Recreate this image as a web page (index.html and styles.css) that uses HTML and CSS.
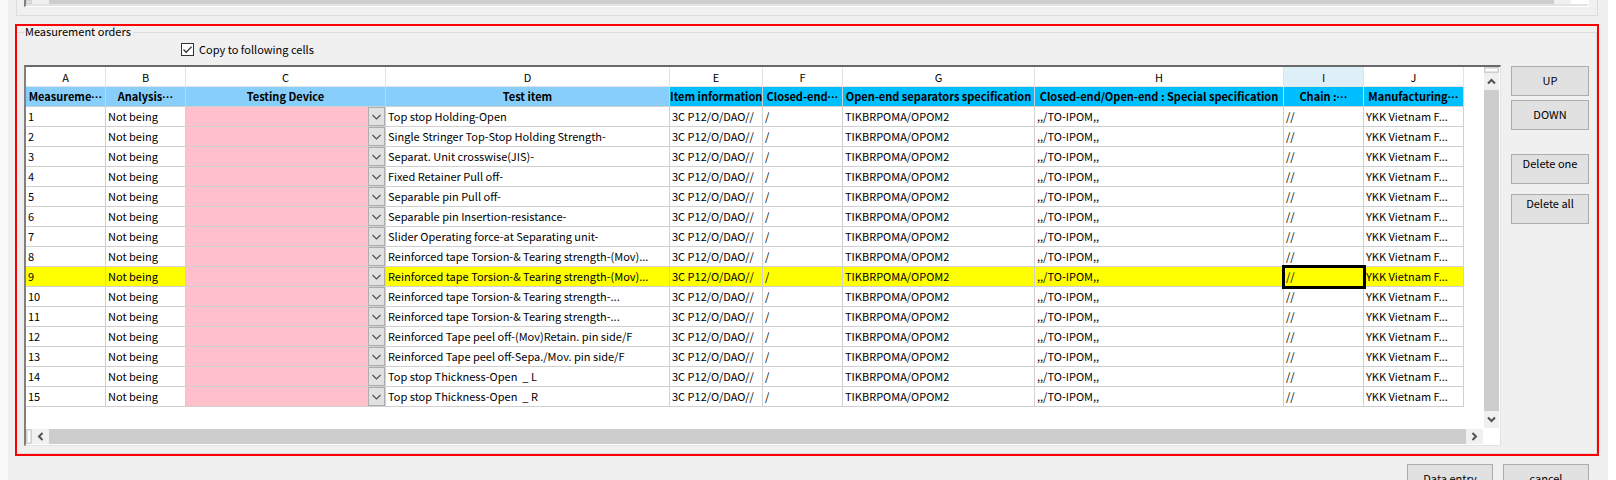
FILE: index.html
```html
<!DOCTYPE html>
<html lang="en">
<head>
<meta charset="utf-8">
<title>Measurement orders</title>
<link rel="stylesheet" href="styles.css">
</head>
<body>
<main class="window">
  <section class="upper-group">
    <div class="upper-frame">
      <span class="split-v"></span>
      <span class="upper-gap"></span>
      <span class="thumb"></span>
      <span class="upper-gap end"></span>
      <span class="corner"></span>
    </div>
  </section>

  <section class="highlight">
    <fieldset class="orders">
      <legend>Measurement orders</legend>
      <label class="copy-option">
        <span class="tick">
          <input type="checkbox" checked>
          <svg viewBox="0 0 13 13" width="13" height="13"><path d="M2.5 6.5 5.2 9.3 10.6 3.6" fill="none" stroke="#333" stroke-width="1.3"/></svg>
        </span>
        Copy to following cells
      </label>
      <div class="content">
        <div class="grid-frame">
          <div class="viewport">
            <table class="sheet">
              <colgroup><col class="w80"><col class="w80"><col class="w200"><col class="w284"><col class="w93"><col class="w80"><col class="w192"><col class="w249"><col class="w80"><col class="w100"></colgroup>
              <thead>
                <tr class="letters"><th>A</th><th>B</th><th>C</th><th>D</th><th>E</th><th>F</th><th>G</th><th>H</th><th class="current">I</th><th>J</th></tr>
                <tr class="titles"><th>Measureme<span class="dots">···</span></th><th>Analysis<span class="dots">···</span></th><th>Testing Device</th><th>Test item</th><th class="deep">Item information</th><th class="deep">Closed-end<span class="dots">···</span></th><th class="deep">Open-end separators specification</th><th class="deep">Closed-end/Open-end : Special specification</th><th class="deep">Chain :<span class="dots">···</span></th><th class="deep">Manufacturing<span class="dots">···</span></th></tr>
              </thead>
              <tbody>
                <tr><td>1</td><td>Not being</td><td class="device"><select aria-label="Testing device 1"></select></td><td>Top stop Holding-Open</td><td>3C P12/O/DAO//</td><td>/</td><td>TIKBRPOMA/OPOM2</td><td>,,/TO-IPOM,,</td><td>//</td><td>YKK Vietnam F...</td></tr>
                <tr><td>2</td><td>Not being</td><td class="device"><select aria-label="Testing device 2"></select></td><td>Single Stringer Top-Stop Holding Strength-</td><td>3C P12/O/DAO//</td><td>/</td><td>TIKBRPOMA/OPOM2</td><td>,,/TO-IPOM,,</td><td>//</td><td>YKK Vietnam F...</td></tr>
                <tr><td>3</td><td>Not being</td><td class="device"><select aria-label="Testing device 3"></select></td><td>Separat. Unit crosswise(JIS)-</td><td>3C P12/O/DAO//</td><td>/</td><td>TIKBRPOMA/OPOM2</td><td>,,/TO-IPOM,,</td><td>//</td><td>YKK Vietnam F...</td></tr>
                <tr><td>4</td><td>Not being</td><td class="device"><select aria-label="Testing device 4"></select></td><td>Fixed Retainer Pull off-</td><td>3C P12/O/DAO//</td><td>/</td><td>TIKBRPOMA/OPOM2</td><td>,,/TO-IPOM,,</td><td>//</td><td>YKK Vietnam F...</td></tr>
                <tr><td>5</td><td>Not being</td><td class="device"><select aria-label="Testing device 5"></select></td><td>Separable pin Pull off-</td><td>3C P12/O/DAO//</td><td>/</td><td>TIKBRPOMA/OPOM2</td><td>,,/TO-IPOM,,</td><td>//</td><td>YKK Vietnam F...</td></tr>
                <tr><td>6</td><td>Not being</td><td class="device"><select aria-label="Testing device 6"></select></td><td>Separable pin Insertion-resistance-</td><td>3C P12/O/DAO//</td><td>/</td><td>TIKBRPOMA/OPOM2</td><td>,,/TO-IPOM,,</td><td>//</td><td>YKK Vietnam F...</td></tr>
                <tr><td>7</td><td>Not being</td><td class="device"><select aria-label="Testing device 7"></select></td><td>Slider Operating force-at Separating unit-</td><td>3C P12/O/DAO//</td><td>/</td><td>TIKBRPOMA/OPOM2</td><td>,,/TO-IPOM,,</td><td>//</td><td>YKK Vietnam F...</td></tr>
                <tr><td>8</td><td>Not being</td><td class="device"><select aria-label="Testing device 8"></select></td><td>Reinforced tape Torsion-&amp; Tearing strength-(Mov)...</td><td>3C P12/O/DAO//</td><td>/</td><td>TIKBRPOMA/OPOM2</td><td>,,/TO-IPOM,,</td><td>//</td><td>YKK Vietnam F...</td></tr>
                <tr class="selected"><td>9</td><td>Not being</td><td class="device"><select aria-label="Testing device 9"></select></td><td>Reinforced tape Torsion-&amp; Tearing strength-(Mov)...</td><td>3C P12/O/DAO//</td><td>/</td><td>TIKBRPOMA/OPOM2</td><td>,,/TO-IPOM,,</td><td class="active">//</td><td>YKK Vietnam F...</td></tr>
                <tr><td>10</td><td>Not being</td><td class="device"><select aria-label="Testing device 10"></select></td><td>Reinforced tape Torsion-&amp; Tearing strength-...</td><td>3C P12/O/DAO//</td><td>/</td><td>TIKBRPOMA/OPOM2</td><td>,,/TO-IPOM,,</td><td>//</td><td>YKK Vietnam F...</td></tr>
                <tr><td>11</td><td>Not being</td><td class="device"><select aria-label="Testing device 11"></select></td><td>Reinforced tape Torsion-&amp; Tearing strength-...</td><td>3C P12/O/DAO//</td><td>/</td><td>TIKBRPOMA/OPOM2</td><td>,,/TO-IPOM,,</td><td>//</td><td>YKK Vietnam F...</td></tr>
                <tr><td>12</td><td>Not being</td><td class="device"><select aria-label="Testing device 12"></select></td><td>Reinforced Tape peel off-(Mov)Retain. pin side/F</td><td>3C P12/O/DAO//</td><td>/</td><td>TIKBRPOMA/OPOM2</td><td>,,/TO-IPOM,,</td><td>//</td><td>YKK Vietnam F...</td></tr>
                <tr><td>13</td><td>Not being</td><td class="device"><select aria-label="Testing device 13"></select></td><td>Reinforced Tape peel off-Sepa./Mov. pin side/F</td><td>3C P12/O/DAO//</td><td>/</td><td>TIKBRPOMA/OPOM2</td><td>,,/TO-IPOM,,</td><td>//</td><td>YKK Vietnam F...</td></tr>
                <tr><td>14</td><td>Not being</td><td class="device"><select aria-label="Testing device 14"></select></td><td>Top stop Thickness-Open&nbsp; _ L</td><td>3C P12/O/DAO//</td><td>/</td><td>TIKBRPOMA/OPOM2</td><td>,,/TO-IPOM,,</td><td>//</td><td>YKK Vietnam F...</td></tr>
                <tr><td>15</td><td>Not being</td><td class="device"><select aria-label="Testing device 15"></select></td><td>Top stop Thickness-Open&nbsp; _ R</td><td>3C P12/O/DAO//</td><td>/</td><td>TIKBRPOMA/OPOM2</td><td>,,/TO-IPOM,,</td><td>//</td><td>YKK Vietnam F...</td></tr>
              </tbody>
            </table>
          </div>
          <div class="vbar">
            <span class="split-h"></span>
            <button class="arrow up" aria-label="Scroll up"><svg viewBox="0 0 9 9" width="9" height="9"><path d="M1 6.5 4.5 3 8 6.5" fill="none" stroke="#505050" stroke-width="2"/></svg></button>
            <span class="thumb"></span>
            <button class="arrow" aria-label="Scroll down"><svg viewBox="0 0 9 9" width="9" height="9"><path d="M1 2.5 4.5 6 8 2.5" fill="none" stroke="#505050" stroke-width="2"/></svg></button>
          </div>
          <div class="hbar">
            <span class="split-v"></span>
            <button class="arrow" aria-label="Scroll left"><svg viewBox="0 0 9 9" width="9" height="9"><path d="M6.5 1 3 4.5 6.5 8" fill="none" stroke="#505050" stroke-width="2"/></svg></button>
            <span class="thumb"></span>
            <button class="arrow" aria-label="Scroll right"><svg viewBox="0 0 9 9" width="9" height="9"><path d="M2.5 1 6 4.5 2.5 8" fill="none" stroke="#505050" stroke-width="2"/></svg></button>
          </div>
        </div>
        <div class="side">
          <button class="btn">UP</button>
          <button class="btn">DOWN</button>
          <button class="btn raised first">Delete one</button>
          <button class="btn raised">Delete all</button>
        </div>
      </div>
    </fieldset>
  </section>

  <footer class="actions">
    <button class="btn wide">Data entry</button>
    <button class="btn wide">cancel</button>
  </footer>
</main>
</body>
</html>
```
FILE: styles.css
```css
* { box-sizing: border-box; }

html, body { height: 100%; overflow: hidden; }

body {
  margin: 0;
  padding: 0 8px;
  background: linear-gradient(90deg, #faf9f8 50%, #fff 50%);
  color: #000;
  font: 11px/16px "Noto Sans CJK JP", "Liberation Sans", sans-serif;
}

button, select, input { font: inherit; color: inherit; margin: 0; }

.window { min-height: 100%; background: #f0f0f0; }

/* Lower edge of the group above */
.upper-group {
  height: 16px;
  margin: 0 10px 0 8px;
  padding: 0 8px 0 7px;
  border: 1px solid #dcdcdc;
  border-top: 0;
}

.upper-frame {
  display: flex;
  height: 7px;
  padding-bottom: 1px;
  border: 1px solid #fff;
  border-top: 0;
  border-left: 2px solid #808080;
  background: #e3e3e3;
}

.upper-frame > * { height: 4px; }
.upper-gap { width: 17px; background: #f0f0f0; }
.corner { width: 17px; background: #fff; }

.thumb { flex: 1; background: #cdcdcd; }

.highlight {
  margin: 8px 9px 0 7px;
  border: 2px solid #f00;
}

.orders {
  min-width: 0;
  margin: 0;
  padding: 0 7px 7px 7px;
  border: 1px solid #dcdcdc;
  border-left: 0;
}

.orders legend { margin: 0; padding: 0 2px 2px 1px; line-height: 10px; }

.copy-option {
  display: flex;
  align-items: center;
  gap: 5px;
  width: max-content;
  margin: 3px 0 8px 157px;
}

.tick { display: grid; }
.tick > * { grid-area: 1 / 1; }
.tick svg { pointer-events: none; }
.tick input {
  appearance: none;
  width: 13px;
  height: 13px;
  border: 1px solid #333;
  background: #fff;
}

.content { display: flex; align-items: flex-start; gap: 10px; }

.grid-frame {
  flex: 1;
  min-width: 0;
  display: grid;
  grid-template-columns: minmax(0, 1fr) 17px;
  grid-template-rows: auto 17px;
  background: #fff;
  border: 2px solid #e3e3e3;
  border-top-color: #696969;
  border-left-color: #808080;
  border-right-width: 1px;
  border-bottom-width: 1px;
}

.viewport { overflow: hidden; padding-bottom: 21px; }

.sheet {
  table-layout: fixed;
  width: 1438px;
  border-collapse: separate;
  border-spacing: 0;
}

.w80 { width: 80px; }
.w93 { width: 93px; }
.w100 { width: 100px; }
.w192 { width: 192px; }
.w200 { width: 200px; }
.w249 { width: 249px; }
.w284 { width: 284px; }

.sheet th, .sheet td {
  height: 20px;
  padding: 1px 2px 2px;
  border: solid #d0d0d0;
  border-width: 0 1px 1px 0;
  line-height: 16px;
  white-space: nowrap;
  overflow: hidden;
}

.sheet .letters th { padding: 2px 0 1px; font-weight: 400; border-color: #e3e3e3; }
.letters .current { background: #dfeff8; }
.sheet .titles th { padding: 0 0 2px; background: #87cefa; font-weight: 700; }
.sheet .titles .deep { background: #00bfff; }
.dots { font-family: "Liberation Sans", sans-serif; line-height: 1; }

.sheet .device { padding: 0; background: #ffc0cb; }
.device select {
  appearance: none;
  display: block;
  width: 100%;
  height: 19px;
  border: 0;
  border-radius: 0;
  background: #ffc0cb url("data:image/svg+xml,%3Csvg xmlns='http://www.w3.org/2000/svg' width='17' height='19'%3E%3Crect x='.5' y='.5' width='16' height='18' fill='%23e1e1e1' stroke='%23adadad'/%3E%3Cpath d='M4.500 8 8.500 12 12.500 8' fill='none' stroke='%23505050' stroke-width='1.200'/%3E%3C/svg%3E") no-repeat right top;
}

.selected td { background: #ff0; }
.sheet .active { position: relative; outline: 3px solid #000; outline-offset: -1px; }

.arrow {
  display: grid;
  place-items: center;
  flex: none;
  padding: 0;
  border: 0;
  width: 17px;
  height: 17px;
  background: #f0f0f0;
}

.vbar { display: flex; flex-direction: column; padding: 0 1px; }
.vbar .arrow { width: 15px; }
.hbar { display: flex; padding: 1px 0; }
.hbar .arrow { height: 15px; }

.split-h { height: 6px; border: 1px solid #d0d0d0; background: #fff; box-shadow: inset 0 0 0 1px #e3e3e3; }
.split-v { width: 6px; border: 1px solid #d0d0d0; background: #fff; box-shadow: inset 0 0 0 1px #e3e3e3; }

.side { display: flex; flex-direction: column; gap: 4px; width: 78px; padding-top: 1px; }

.btn {
  height: 30px;
  padding: 0 0 2px;
  border: 1px solid #adadad;
  background: #e1e1e1;
  line-height: 16px;
}

.raised { padding-bottom: 12px; margin-top: 6px; }
.raised.first { margin-top: 20px; }

.actions {
  display: flex;
  justify-content: flex-end;
  gap: 10px;
  padding: 8px 19px 0 0;
}

.wide { width: 86px; }
```
